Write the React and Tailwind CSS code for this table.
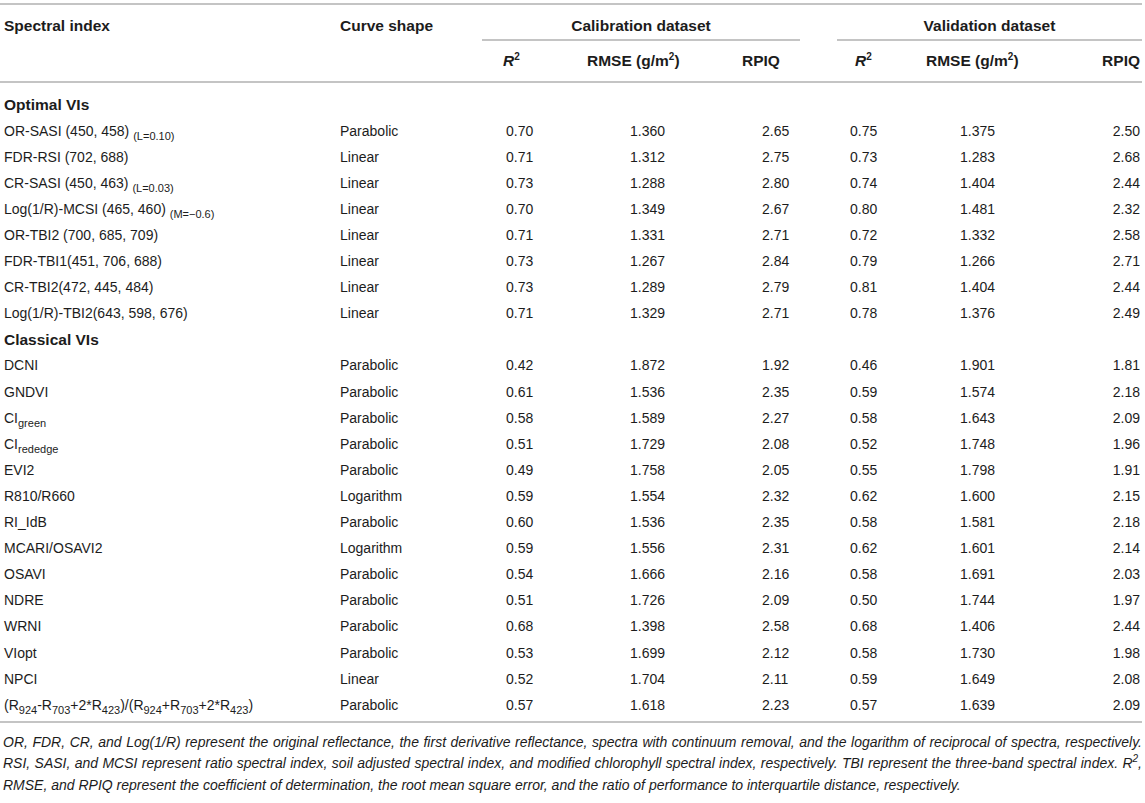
import React from 'react'

const Sub = ({ children }) => (
  <span className="relative top-[4px] text-[11px]">{children}</span>
)

const Sup = ({ children }) => (
  <span className="relative -top-[6px] text-[10px]">{children}</span>
)

const grid = "grid grid-cols-[340px_142px_88px_150px_80px_37px_63px_170px_72px]"

const optimal = [
  [<>OR-SASI (450, 458) <Sub>(L=0.10)</Sub></>, 'Parabolic', '0.70', '1.360', '2.65', '0.75', '1.375', '2.50'],
  ['FDR-RSI (702, 688)', 'Linear', '0.71', '1.312', '2.75', '0.73', '1.283', '2.68'],
  [<>CR-SASI (450, 463) <Sub>(L=0.03)</Sub></>, 'Linear', '0.73', '1.288', '2.80', '0.74', '1.404', '2.44'],
  [<>Log(1/R)-MCSI (465, 460) <Sub>(M=−0.6)</Sub></>, 'Linear', '0.70', '1.349', '2.67', '0.80', '1.481', '2.32'],
  ['OR-TBI2 (700, 685, 709)', 'Linear', '0.71', '1.331', '2.71', '0.72', '1.332', '2.58'],
  ['FDR-TBI1(451, 706, 688)', 'Linear', '0.73', '1.267', '2.84', '0.79', '1.266', '2.71'],
  ['CR-TBI2(472, 445, 484)', 'Linear', '0.73', '1.289', '2.79', '0.81', '1.404', '2.44'],
  ['Log(1/R)-TBI2(643, 598, 676)', 'Linear', '0.71', '1.329', '2.71', '0.78', '1.376', '2.49'],
]

const classical = [
  ['DCNI', 'Parabolic', '0.42', '1.872', '1.92', '0.46', '1.901', '1.81'],
  ['GNDVI', 'Parabolic', '0.61', '1.536', '2.35', '0.59', '1.574', '2.18'],
  [<>CI<Sub>green</Sub></>, 'Parabolic', '0.58', '1.589', '2.27', '0.58', '1.643', '2.09'],
  [<>CI<Sub>rededge</Sub></>, 'Parabolic', '0.51', '1.729', '2.08', '0.52', '1.748', '1.96'],
  ['EVI2', 'Parabolic', '0.49', '1.758', '2.05', '0.55', '1.798', '1.91'],
  ['R810/R660', 'Logarithm', '0.59', '1.554', '2.32', '0.62', '1.600', '2.15'],
  ['RI_IdB', 'Parabolic', '0.60', '1.536', '2.35', '0.58', '1.581', '2.18'],
  ['MCARI/OSAVI2', 'Logarithm', '0.59', '1.556', '2.31', '0.62', '1.601', '2.14'],
  ['OSAVI', 'Parabolic', '0.54', '1.666', '2.16', '0.58', '1.691', '2.03'],
  ['NDRE', 'Parabolic', '0.51', '1.726', '2.09', '0.50', '1.744', '1.97'],
  ['WRNI', 'Parabolic', '0.68', '1.398', '2.58', '0.68', '1.406', '2.44'],
  ['VIopt', 'Parabolic', '0.53', '1.699', '2.12', '0.58', '1.730', '1.98'],
  ['NPCI', 'Linear', '0.52', '1.704', '2.11', '0.59', '1.649', '2.08'],
  [
    <>(R<Sub>924</Sub>-R<Sub>703</Sub>+2*R<Sub>423</Sub>)/(R<Sub>924</Sub>+R<Sub>703</Sub>+2*R<Sub>423</Sub>)</>,
    'Parabolic', '0.57', '1.618', '2.23', '0.57', '1.639', '2.09',
  ],
]

const Row = ({ r }) => (
  <div className={`${grid} h-[26.1px] items-center`}>
    <div className="pl-[4px] whitespace-nowrap">{r[0]}</div>
    <div>{r[1]}</div>
    <div className="pl-[24px]">{r[2]}</div>
    <div className="pl-[60px]">{r[3]}</div>
    <div className="pl-[42px]">{r[4]}</div>
    <div />
    <div className="pl-[13px]">{r[5]}</div>
    <div className="pl-[60px]">{r[6]}</div>
    <div className="text-right pr-[2px]">{r[7]}</div>
  </div>
)

const Section = ({ title }) => (
  <div className="h-[26.1px] flex items-center pl-[4px] font-bold text-[15.5px]">{title}</div>
)

export default function App() {
  return (
    <div className="w-[1145px] h-[803px] bg-white text-[#1c1c1c] text-[14px] font-['Liberation_Sans',Arial,sans-serif] overflow-hidden">
      <div className="w-[1142px] pt-[3px]">
        <div className="h-[2px] bg-[#c4c4c4]" />

        {/* header */}
        <div className={`${grid} h-[36px] font-bold text-[15.5px]`}>
          <div className="pl-[4px] pt-[9px]">Spectral index</div>
          <div className="pt-[9px]">Curve shape</div>
          <div className="col-span-3 border-b-2 border-[#c4c4c4] text-center pt-[9px]">Calibration dataset</div>
          <div />
          <div className="col-span-3 border-b-2 border-[#c4c4c4] text-center pt-[9px]">Validation dataset</div>
        </div>
        <div className={`${grid} h-[40px] items-center font-bold text-[15.5px]`}>
          <div />
          <div />
          <div className="pl-[21px]"><i>R</i><Sup>2</Sup></div>
          <div className="pl-[17px]">RMSE (g/m<Sup>2</Sup>)</div>
          <div className="pl-[22px]">RPIQ</div>
          <div />
          <div className="pl-[18px]"><i>R</i><Sup>2</Sup></div>
          <div className="pl-[26px]">RMSE (g/m<Sup>2</Sup>)</div>
          <div className="text-right pr-[2px]">RPIQ</div>
        </div>
        <div className="h-[2px] bg-[#c4c4c4]" />

        {/* body */}
        <div className="pt-[9px] pb-[3px]">
          <Section title="Optimal VIs" />
          {optimal.map((r, i) => <Row key={'o' + i} r={r} />)}
          <Section title="Classical VIs" />
          {classical.map((r, i) => <Row key={'c' + i} r={r} />)}
        </div>
        <div className="h-[2px] bg-[#c4c4c4]" />

        {/* footnote */}
        <div className="pt-[9px] pl-[3px] italic text-[14px] leading-[20.5px]">
          <div className="text-justify [text-align-last:justify]">
            OR, FDR, CR, and Log(1/R) represent the original reflectance, the first derivative reflectance, spectra with continuum removal, and the logarithm of reciprocal of spectra, respectively.
          </div>
          <div className="text-justify [text-align-last:justify]">
            RSI, SASI, and MCSI represent ratio spectral index, soil adjusted spectral index, and modified chlorophyll spectral index, respectively. TBI represent the three-band spectral index. R<Sup>2</Sup>,
          </div>
          <div>
            RMSE, and RPIQ represent the coefficient of determination, the root mean square error, and the ratio of performance to interquartile distance, respectively.
          </div>
        </div>
      </div>
    </div>
  )
}
